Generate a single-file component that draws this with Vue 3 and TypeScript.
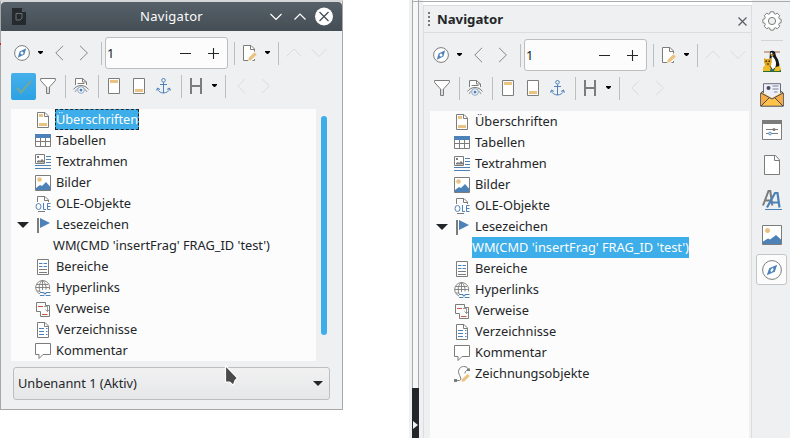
<script setup lang="ts">
interface Entry {
  label: string
  icon?: string
  open?: boolean
  child?: boolean
}
interface Tool {
  kind: 'icon' | 'sep' | 'drop' | 'spin' | 'check'
  icon?: string
  dim?: boolean
}

const icon = (name: string, dim = false): Tool => ({ kind: 'icon', icon: name, dim })
const sep: Tool = { kind: 'sep' }
const drop: Tool = { kind: 'drop' }

const topTools: Tool[] = [
  icon('compass'), drop, icon('prev'), icon('next'), sep, { kind: 'spin' }, sep,
  icon('edit'), drop, sep, icon('up', true), icon('down', true),
]
const bottomTools: Tool[] = [
  icon('filter'), sep, icon('docview'), sep, icon('header'), icon('footer'), icon('anchor'), sep,
  icon('heading'), drop, sep, icon('prev', true), icon('next', true),
]

const entries: Entry[] = [
  { label: 'Überschriften', icon: 'headings' },
  { label: 'Tabellen', icon: 'table' },
  { label: 'Textrahmen', icon: 'frame' },
  { label: 'Bilder', icon: 'image' },
  { label: 'OLE-Objekte', icon: 'ole' },
  { label: 'Lesezeichen', icon: 'flag', open: true },
  { label: "WM(CMD 'insertFrag' FRAG_ID 'test')", child: true },
  { label: 'Bereiche', icon: 'section' },
  { label: 'Hyperlinks', icon: 'link' },
  { label: 'Verweise', icon: 'reference' },
  { label: 'Verzeichnisse', icon: 'index' },
  { label: 'Kommentar', icon: 'comment' },
]
const drawing: Entry = { label: 'Zeichnungsobjekte', icon: 'draw' }

const panels = [
  { id: 'floating', top: topTools, bottom: [{ kind: 'check' } as Tool, ...bottomTools], rows: entries, selected: 0 },
  { id: 'docked', top: topTools, bottom: bottomTools, rows: [...entries, drawing], selected: 6 },
]
const tabs = ['gallery', 'mail', 'properties', 'page', 'styles', 'picture', 'compassbig']
</script>

<template>
  <div class="screen">
    <svg class="defs" width="0" height="0">
      <symbol id="compass" viewBox="0 0 16 16">
        <circle cx="8" cy="8" r="7.4" fill="#fff" stroke="#7c7c7a" />
        <path d="M12.2 3.3 10.4 9.4 3.8 12.7 5.6 6.6Z" fill="#4d82b8" /><circle cx="8" cy="8" r="1.5" fill="#fff" />
      </symbol>
      <symbol id="prev" viewBox="0 0 16 16"><path d="M12 .8 4.8 8 12 15.2" fill="none" stroke="currentColor" /></symbol>
      <symbol id="next" viewBox="0 0 16 16"><path d="M4 .8 11.4 8 4 15.2" fill="none" stroke="currentColor" /></symbol>
      <symbol id="up" viewBox="0 0 16 16"><path d="M.5 11.5 8 4l7.5 7.5" fill="none" stroke="currentColor" /></symbol>
      <symbol id="down" viewBox="0 0 16 16"><path d="M.5 4 8 11.5 15.5 4" fill="none" stroke="currentColor" /></symbol>
      <symbol id="edit" viewBox="0 0 16 16">
        <path d="M1.5.5H9L12.5 4v11.500h-11z" fill="#fff" /><path d="M6 15.500H1.500V.5H9L12.500 4v2.500M8.500.5V4.500h4M12.500 14v1.500h-2" fill="none" stroke="#7c7c7a" />
        <path d="M6 15.800 6.800 12.800 12.300 7.200 14.800 9.500 9 15.200Z" fill="#eac282" />
      </symbol>
      <symbol id="filter" viewBox="0 0 16 16">
        <path d="M.6.5h14.800V2.500L9.500 9v6.500h-3V9L.6 2.500z" fill="#fff" stroke="#7c7c7a" /><path d="M7 9h2v6H7z" fill="#ddd" />
      </symbol>
      <symbol id="docview" viewBox="0 0 16 16">
        <path d="M2.500 7V.5h7L13.500 4v3" fill="#fff" stroke="#7c7c7a" /><path d="M9.500.5V4h4M4.500 5.500h7" fill="none" stroke="#7c7c7a" />
        <path d="M.5 11.500C4 6.200 12 6.200 15.500 11.500" fill="none" stroke="#7c7c7a" /><path d="M2 14C5 8 11 8 14 14" fill="none" stroke="#7c7c7a" stroke-width=".8" />
        <circle cx="8" cy="12" r="3.300" fill="#fff" stroke="#8aa9c8" /><circle cx="8" cy="12" r="1.500" fill="#4d82b8" />
      </symbol>
      <symbol id="header" viewBox="0 0 16 16"><path d="M2.500.5h11v15h-11z" fill="#fff" stroke="#7c7c7a" /><path d="M4 2h8v3H4z" fill="#eac282" /></symbol>
      <symbol id="footer" viewBox="0 0 16 16"><path d="M2.500.5h11v15h-11z" fill="#fff" stroke="#7c7c7a" /><path d="M4 11h8v3H4z" fill="#eac282" /></symbol>
      <symbol id="anchor" viewBox="0 0 16 16">
        <g fill="none" stroke="#4d82b8"><circle cx="7.500" cy="2.300" r="1.800" /><path d="M7.500 4.200V15M4 6.500h7M1.500 10.500C2 13.500 4.500 14.800 7.500 15c3-.2 5.500-1.500 6-4.500M.5 12.500l1-2.500 2.500 1.500M14.500 12.500l-1-2.500L11 11.500" /></g>
      </symbol>
      <symbol id="heading" viewBox="0 0 16 16"><path d="M2 0v16M12 0v16M2 8h10" fill="none" stroke="#7c7c7a" stroke-width="2" /></symbol>
      <symbol id="headings" viewBox="0 0 16 16">
        <path d="M2.500.5h7.500l3.500 3.500v11.500h-11z" fill="#fff" stroke="#7c7c7a" /><path d="M9.500 .5V4.500h4" fill="none" stroke="#7c7c7a" /><path d="M4 2h4v3H4zM4 11h8v3H4z" fill="#eac282" />
      </symbol>
      <symbol id="table" viewBox="0 0 16 16">
        <path d="M.5 2.500h15v11H.5z" fill="#fff" stroke="#7c7c7a" /><path d="M5.500 5v8.500M10.500 5v8.500M.5 8.500h15" stroke="#7c7c7a" /><path d="M0 1h16v4H0z" fill="#4d82b8" />
      </symbol>
      <symbol id="frame" viewBox="0 0 16 16">
        <path d="M.5.5h9v9h-9z" fill="#fff" stroke="#7c7c7a" /><path d="M2 8.500V7l2-1 1 1 2-2 2 2v1.500zM2 2h2v2H2z" fill="#7c7c7a" />
        <path d="M11 2.500h5M11 5.500h5M11 8.500h5M0 11.500h16M0 14.500h16" stroke="#4d82b8" />
      </symbol>
      <symbol id="image" viewBox="0 0 16 16">
        <path d="M.5.500h15v15H.5z" fill="#fff" stroke="#7c7c7a" /><circle cx="4.500" cy="4.500" r="2.300" fill="#eac282" /><path d="M1 15v-2l4-3 2 1 4-4 4 4.500V15z" fill="#4d82b8" />
      </symbol>
      <symbol id="picture" viewBox="0 0 20 20">
        <path d="M.5.500h19v19H.5z" fill="#fff" stroke="#7c7c7a" /><circle cx="5.500" cy="5.500" r="2.500" fill="#eac282" /><path d="M1 19v-2.500l5-3 2 1L14 10l5 4.500V19z" fill="#4d82b8" />
      </symbol>
      <symbol id="ole" viewBox="0 0 16 16">
        <path d="M2.500 6V.5h7.500L13.500 4v2M9.500 .5V4.500h4M3 15.500h7" fill="none" stroke="#7c7c7a" />
        <g fill="none" stroke="#4d82b8"><ellipse cx="3.500" cy="10.500" rx="2.500" ry="3" /><path d="M8.500 7v6.500H11M15.500 7.500h-3v6h3M12.500 10.500h3" /></g>
      </symbol>
      <symbol id="flag" viewBox="0 0 16 16"><path d="M2 1h2v15H2z" fill="#7c7c7a" /><path d="M5 1l10 5-10 5z" fill="#4d82b8" /></symbol>
      <symbol id="section" viewBox="0 0 16 16">
        <path d="M2.500.5h11v15h-11z" fill="#fff" stroke="#7c7c7a" /><path d="M4 4.500h3.500M8.500 4.500H12M4 7.500h3.500M8.500 7.500H12" stroke="#4d82b8" /><path d="M4 10.500h8M4 13.500h8" stroke="#7c7c7a" />
      </symbol>
      <symbol id="link" viewBox="0 0 16 16">
        <g fill="none" stroke="#7c7c7a" stroke-width=".9"><path d="M5 14A7 7 0 1 1 14.400 9.500M5 12C3 5 5.500 1.500 7.500.5 9.500 1.500 11.300 5 11 9.500M7.500.5V10M.5 7.500h14M2 4.500h11M2 11h3" /></g>
        <path d="M5 12.500h3.500l3 3H15.500M5 15.500h3.500l3-3H15.500" fill="none" stroke="#4d82b8" stroke-width="1.100" />
      </symbol>
      <symbol id="reference" viewBox="0 0 16 16">
        <path d="M5.500 10.500H1.500v-9h9v3M5.500 10.500v5h9v-11h-4" fill="none" stroke="#7c7c7a" /><path d="M9 5.500h3.500v5M10.500 8.500l2 2 2-2" fill="none" stroke="#7c7c7a" stroke-width=".8" /><path d="M3 5.500h5M7 13.500h5.500" stroke="#c9583f" />
      </symbol>
      <symbol id="index" viewBox="0 0 16 16">
        <path d="M2.500.5H10L13.500 4v11.500h-11z" fill="#fff" stroke="#7c7c7a" /><path d="M9.500 .5V4.500h4" fill="none" stroke="#7c7c7a" /><path d="M4 6.500h5M4 9.500h5M4 12.500h5M11 6.500h1.500M11 9.500h1.500M11 12.500h1.500" stroke="#4d82b8" />
      </symbol>
      <symbol id="comment" viewBox="0 0 16 16"><path d="M.5.500h15v11H8L4 15.500v-4H.5z" fill="#fff" stroke="#7c7c7a" /></symbol>
      <symbol id="draw" viewBox="0 0 16 16">
        <path d="M1 14.500h4.500C9 13.500 4.500 9 4.500 5.500 5 1 8.500.5 10 .5c3 0 4 2 4.500 3M14 3.500c-2 1-3 2-3 4" fill="none" stroke="#7c7c7a" /><path d="M0 13h3v3H0zM13 2.500h3v2.500h-3z" fill="#7c7c7a" /><path d="M7.500 15.800 8.200 13 13.500 8 15.800 10 10.500 15.200Z" fill="#eac282" />
      </symbol>
      <symbol id="gear" viewBox="0 0 20 20">
        <path d="M8.300.8h3.400l.6 2 1 .4 2-1 2.400 2.400-1 2 .4 1 2 .7v3.400l-2 .6-.4 1 1 2-2.400 2.400-2-1-1 .4-.6 2H8.300l-.6-2-1-.4-2 1-2.400-2.400 1-2-.4-1-2-.6V8.300l2-.7.4-1-1-2 2.400-2.400 2 1 1-.4z" fill="#fff" stroke="#7c7c7a" stroke-linejoin="round" /><circle cx="10" cy="10" r="3.600" fill="#eff0f1" stroke="#7c7c7a" />
      </symbol>
      <symbol id="gallery" viewBox="0 0 20 22">
        <path d="M2 1h16v2H2z" fill="#c9ab9c" /><path d="M8 1.500Q10.500 0 13 2l1 4q3 4 3.500 9l-2 5H8L7.500 9z" fill="#15171a" />
        <path d="M10 6q4 3 4 8t-4 5l-2-5z" fill="#fff" /><circle cx="9.500" cy="3.500" r="1" fill="#fff" /><path d="M8 4.500h4l-2 2z" fill="#e6a91b" />
        <path d="M1 19h18v3H1z" fill="#2f6b28" /><path d="M2 8l2 1h3l2-1 1 3-1 4-1 4H2l1-4-1-3z" fill="#dfa51c" /><path d="M1 17l3-2 5 3-1 3H1zM13.500 17l4.500-1 1 4-2 1h-5z" fill="#f0bd2a" /><path d="M3.500 10.500h1.500V12H3.500zM6.500 10.500H8V12H6.500zM5 13.500h2v1H5z" fill="#332a18" /><path d="M8 19.500h4v1H8z" fill="#3475a5" />
      </symbol>
      <symbol id="mail" viewBox="0 0 24 24">
        <path d="M.7 10 4 7.500h16l3.300 2.500v13.200H.7z" fill="#ffc34b" stroke="#474b5a" stroke-linejoin="round" /><path d="M3.500 10V.7h17V10L12 15z" fill="#edf0fa" />
        <path d="M3.500 10V.7h17V10" fill="none" stroke="#474b5a" stroke-width=".8" />
        <path d="M1.200 10.500 9 15 1.200 22.500zM22.800 10.500 15 15l7.800 7.500z" fill="#f5ac44" /><path d="M1 10l11 6 11-6M9.500 14.500l-8.500 8.500M14.500 14.500 23 23" fill="none" stroke="#474b5a" />
        <circle cx="8.500" cy="5" r="2" fill="#474b5a" /><path d="M12.500 3h6M12.500 6h6M14 9h3.500" stroke="#a4a8b7" stroke-width="1.600" />
      </symbol>
      <symbol id="properties" viewBox="0 0 20 20">
        <path d="M.5.500h19v19H.5z" fill="#fff" stroke="#7c7c7a" /><path d="M0 0h20v4H0z" fill="#7c7c7a" /><path d="M4 9.500h12M4 13.500h12" stroke="#7c7c7a" /><circle cx="12" cy="9.500" r="1.500" fill="#7c7c7a" /><circle cx="8" cy="13.500" r="1.400" fill="#cfe0ee" stroke="#4d82b8" stroke-width=".8" />
      </symbol>
      <symbol id="page" viewBox="0 0 20 20"><path d="M2.500.500h11l4 4.500v14.500h-15z" fill="#fff" stroke="#7c7c7a" /><path d="M12.500.5v5h5" fill="none" stroke="#7c7c7a" /></symbol>
      <symbol id="styles" viewBox="0 0 20 20">
        <path d="M1 15.500 6.500 1h1.800l2 14.500M3 10.500h6.500" fill="none" stroke="#7c7c7a" stroke-width="2" /><path d="M5 17.500 13 3h2.500l2 14.500M8.500 12.500h8" fill="none" stroke="#4d82b8" stroke-width="2.200" /><path d="M3 19.500h17" stroke="#4d82b8" />
      </symbol>
      <symbol id="compassbig" viewBox="0 0 20 20">
        <circle cx="10" cy="10" r="9.400" fill="#fff" stroke="#7c7c7a" /><path d="M15.200 4.800 12.800 11.800 4.800 15.200 7.200 8.200Z" fill="#4d82b8" /><path d="M11 7.500l.5 2.500L9 12.500 8.500 10z" fill="#fff" />
      </symbol>
    </svg>

    <template v-for="p in panels" :key="p.id">
      <section :class="['frame', p.id]">
        <header v-if="p.id === 'floating'" class="titlebar">
          <svg class="app" viewBox="0 0 14 17"><path d="M0 0h10l4 4v13H0z" fill="#252a2e" /><path d="M10 0v4h4z" fill="#586168" /><path d="M4 5.500h6v4.500l-2 2H4z" fill="none" stroke="#6c7073" /></svg>
          <span class="title">Navigator</span>
          <svg class="winctl" viewBox="0 0 68 20"><path d="M4.500 7l5.500 5.500L15.500 7M28.500 12.500 34 7l5.500 5.500" fill="none" stroke="#fff" stroke-width="1.200" /><circle cx="58" cy="9.500" r="9" fill="#fff" /><path d="M53.500 5l9 9M62.500 5l-9 9" stroke="#475057" stroke-width="1.300" /></svg>
        </header>
        <header v-else class="dockhead">
          <svg class="grip" viewBox="0 0 2 14"><path d="M1 0v14" stroke="#77797b" stroke-width="2" stroke-dasharray="2 2" /></svg>
          <b>Navigator</b>
          <svg class="close" viewBox="0 0 9 9"><path d="M.5.5l8 8M8.500.5l-8 8" stroke="#5a5e61" stroke-width="1.200" /></svg>
        </header>

        <div v-for="(tools, n) in [p.top, p.bottom]" :key="n" :class="['toolbar', n ? 'second' : 'first']">
          <template v-for="(t, i) in tools" :key="i">
            <i v-if="t.kind === 'sep'" class="sep"></i>
            <svg v-else-if="t.kind === 'drop'" class="drop" viewBox="0 0 7 16"><path d="M1 6h5v1L4 9H3L1 7z" fill="#000" /></svg>
            <div v-else-if="t.kind === 'spin'" class="spin">
              <span>1</span>
              <svg viewBox="0 0 40 12"><path d="M0 6.500h11M28 6.500h11M33.500 1v11" stroke="#232629" stroke-width="1.100" /></svg>
            </div>
            <span v-else-if="t.kind === 'check'" class="check"><svg viewBox="0 0 16 16"><path d="M1 9l4 4.500L15 2" fill="none" stroke="#77a69a" stroke-width="2" /></svg></span>
            <svg v-else :class="['ico', { dim: t.dim }]"><use :href="'#' + t.icon" /></svg>
          </template>
        </div>

        <div class="tree">
          <div v-for="(r, i) in p.rows" :key="r.label" :class="['row', { child: r.child, sel: p.selected === i }]">
            <span class="twist"><svg v-if="r.open" viewBox="0 0 12 6"><path d="M0 0h12L6 6z" fill="#232629" /></svg></span>
            <svg v-if="r.icon" class="ico"><use :href="'#' + r.icon" /></svg>
            <span class="label">{{ r.label }}</span>
          </div>
        </div>
        <template v-if="p.id === 'floating'">
          <div class="scroll"></div>
          <div class="combo"><span>Unbenannt 1 (Aktiv)</span><svg viewBox="0 0 10 5"><path d="M0 0h10L5 5z" fill="#232629" /></svg></div>
        </template>
      </section>
      <div v-if="p.id === 'floating'" class="splitter"><div class="handle"><svg viewBox="0 0 5 8"><path d="M0 0l5 4-5 4z" fill="#eff0f1" /></svg></div></div>
    </template>

    <nav class="tabs">
      <svg class="gear"><use href="#gear" /></svg>
      <i class="rule"></i>
      <span v-for="t in tabs" :key="t" :class="['tab', t]"><svg><use :href="'#' + t" /></svg></span>
    </nav>
    <i class="mark"></i>
    <svg class="cursor" viewBox="0 0 16 24"><path d="M1.500 1.500v16.500h4l3.800 3.200 1.800-4.700 2.400-2.500z" fill="#4a4a4a" stroke="#fff" stroke-width="1.200" stroke-linejoin="round" /></svg>
  </div>
</template>

<style>
body { background: #fff; overflow: hidden; }
</style>

<style scoped>
* { box-sizing: border-box; }
.screen { position: relative; display: flex; width: 790px; height: 438px; overflow: hidden; background: #fff; color: #232629; font: 12.8px/21px "Noto Sans", sans-serif; }
.defs { position: absolute; }
svg { display: block; flex: none; }
.frame { background: #eff0f1; flex: none; }
.floating { position: relative; width: 343px; height: 410px; border: solid #a5a7a9; border-width: 0 1px 1px; border-top: 2px solid #d6d7d8; }
.titlebar { display: flex; align-items: center; height: 29px; padding: 0 8px 0 11px; border-radius: 4px 4px 0 0; background: linear-gradient(#566068, #454e55); color: #fcfcfc; }
.app { width: 14px; height: 17px; }
.title { flex: 1; padding-left: 51px; text-align: center; font-size: 13px; letter-spacing: .3px; }
.winctl { width: 68px; height: 20px; }
.toolbar { display: flex; align-items: center; color: #858584; }
.first { height: 32px; margin-top: 6px; padding-left: 13px; }
.second { height: 26px; margin-top: 4px; padding-left: 10px; }
.ico { width: 16px; height: 16px; }
.dim { color: #d9dbdc; }
.toolbar .ico + .ico, .toolbar .ico + .sep { margin-left: 9px; }
.sep { width: 1px; height: 23px; background: #bcbec0; flex: none; }
.sep + .ico { margin-left: 7px; }
.drop { width: 7px; height: 16px; margin: 0 7px 0 6px; }
.first .ico:first-child + .drop { margin-left: 7px; }
.spin { display: flex; align-items: center; justify-content: space-between; width: 123px; height: 32px; margin: 0 6px 0 3px; padding: 0 7px 0 1px; border: 1px solid #bcbec0; border-radius: 3px; background: #fcfcfc; color: #232629; }
.spin svg { width: 40px; height: 12px; }
.check { display: flex; align-items: center; justify-content: center; width: 25px; height: 27px; margin: 0 4px -1px 0; border-radius: 2px; background: linear-gradient(#45afe9, #2ba2e4); }
.check svg { width: 16px; height: 16px; }
.tree { background: #fcfcfc; overflow: hidden; }
.floating .tree { width: 305px; height: 252px; margin: 10px 0 0 10px; }
.row { display: flex; align-items: center; height: 21px; }
.twist { width: 24px; padding-left: 6px; flex: none; }
.twist svg { width: 12px; height: 6px; }
.child .twist { width: 42px; }
.label { height: 21px; white-space: nowrap; }
.row .ico + .label { margin-left: 5px; }
.sel .label { background: #3daee9; color: #fcfcfc; }
.floating .sel .label { line-height: 20px; width: 84px; margin-left: 4px; padding-left: 1px; letter-spacing: -.05px; outline: 1px dashed #232629; outline-offset: -1px; }
.scroll { position: absolute; left: 320px; top: 114px; width: 6px; height: 219px; border-radius: 3px; background: #3daee9; }
.combo { display: flex; align-items: center; justify-content: space-between; width: 317px; height: 33px; margin: 6px 0 0 12px; padding: 0 6px 0 4px; border: 1px solid #bcbec0; border-radius: 3px; background: linear-gradient(#f1f1f2, #e6e7e8); }
.combo svg { width: 10px; height: 5px; }
.splitter { display: flex; align-items: flex-end; width: 14px; margin-left: 66px; border-left: 3px solid #eff0f1; border-right: 4px solid #eff0f1; background: linear-gradient(90deg, #a9abad 1px, #f7f7f8 1px, #f7f7f8 6px, #a9abad 6px); flex: none; }
.handle { width: 7px; height: 50px; padding: 33px 0 0 1px; background: #232629; }
.handle svg { width: 5px; height: 8px; }
.docked { width: 329px; height: 433px; margin-top: 5px; border: 1px solid #dcdddf; border-bottom: 0; }
.dockhead { display: flex; align-items: center; height: 27px; padding: 0 4px; border-bottom: 1px solid #dcdddf; }
.dockhead b { flex: 1; padding-left: 7px; font-size: 13.200px; font-weight: 700; line-height: 25px; }
.grip { width: 2px; height: 14px; }
.close { width: 9px; height: 9px; margin-top: 5px; }
.docked .first { padding-left: 9px; }
.docked .second { padding-left: 10px; }
.docked .tree { width: 319px; height: 327px; margin: 10px 0 0 6px; }
.tabs { display: flex; flex-direction: column; align-items: center; flex: 1; padding: 11px 0 0 2px; background: #eff0f1; }
.gear { width: 20px; height: 20px; }
.rule { width: 22px; height: 1px; margin: 9px 0 1px; background: #d2d4d6; flex: none; }
.tab { display: flex; align-items: center; justify-content: center; width: 31px; height: 35px; flex: none; }
.tab svg { width: 20px; height: 20px; }
.gallery { padding-top: 2px; }
.tab.gallery svg { height: 22px; }
.tab.mail svg { width: 24px; height: 24px; }
.compassbig { height: 31px; margin: 2px 1px 0 0; border: 1px solid #c3c5c7; border-radius: 3px; background: #fcfcfc; }
.screen::after { content: ""; position: absolute; left: 412px; right: 0; top: 1px; height: 1px; background: #a9abad; }
.mark { position: absolute; left: 0; top: 43px; width: 1px; height: 2px; background: #c22; }
.cursor { position: absolute; left: 224px; top: 364px; width: 16px; height: 24px; }
</style>
